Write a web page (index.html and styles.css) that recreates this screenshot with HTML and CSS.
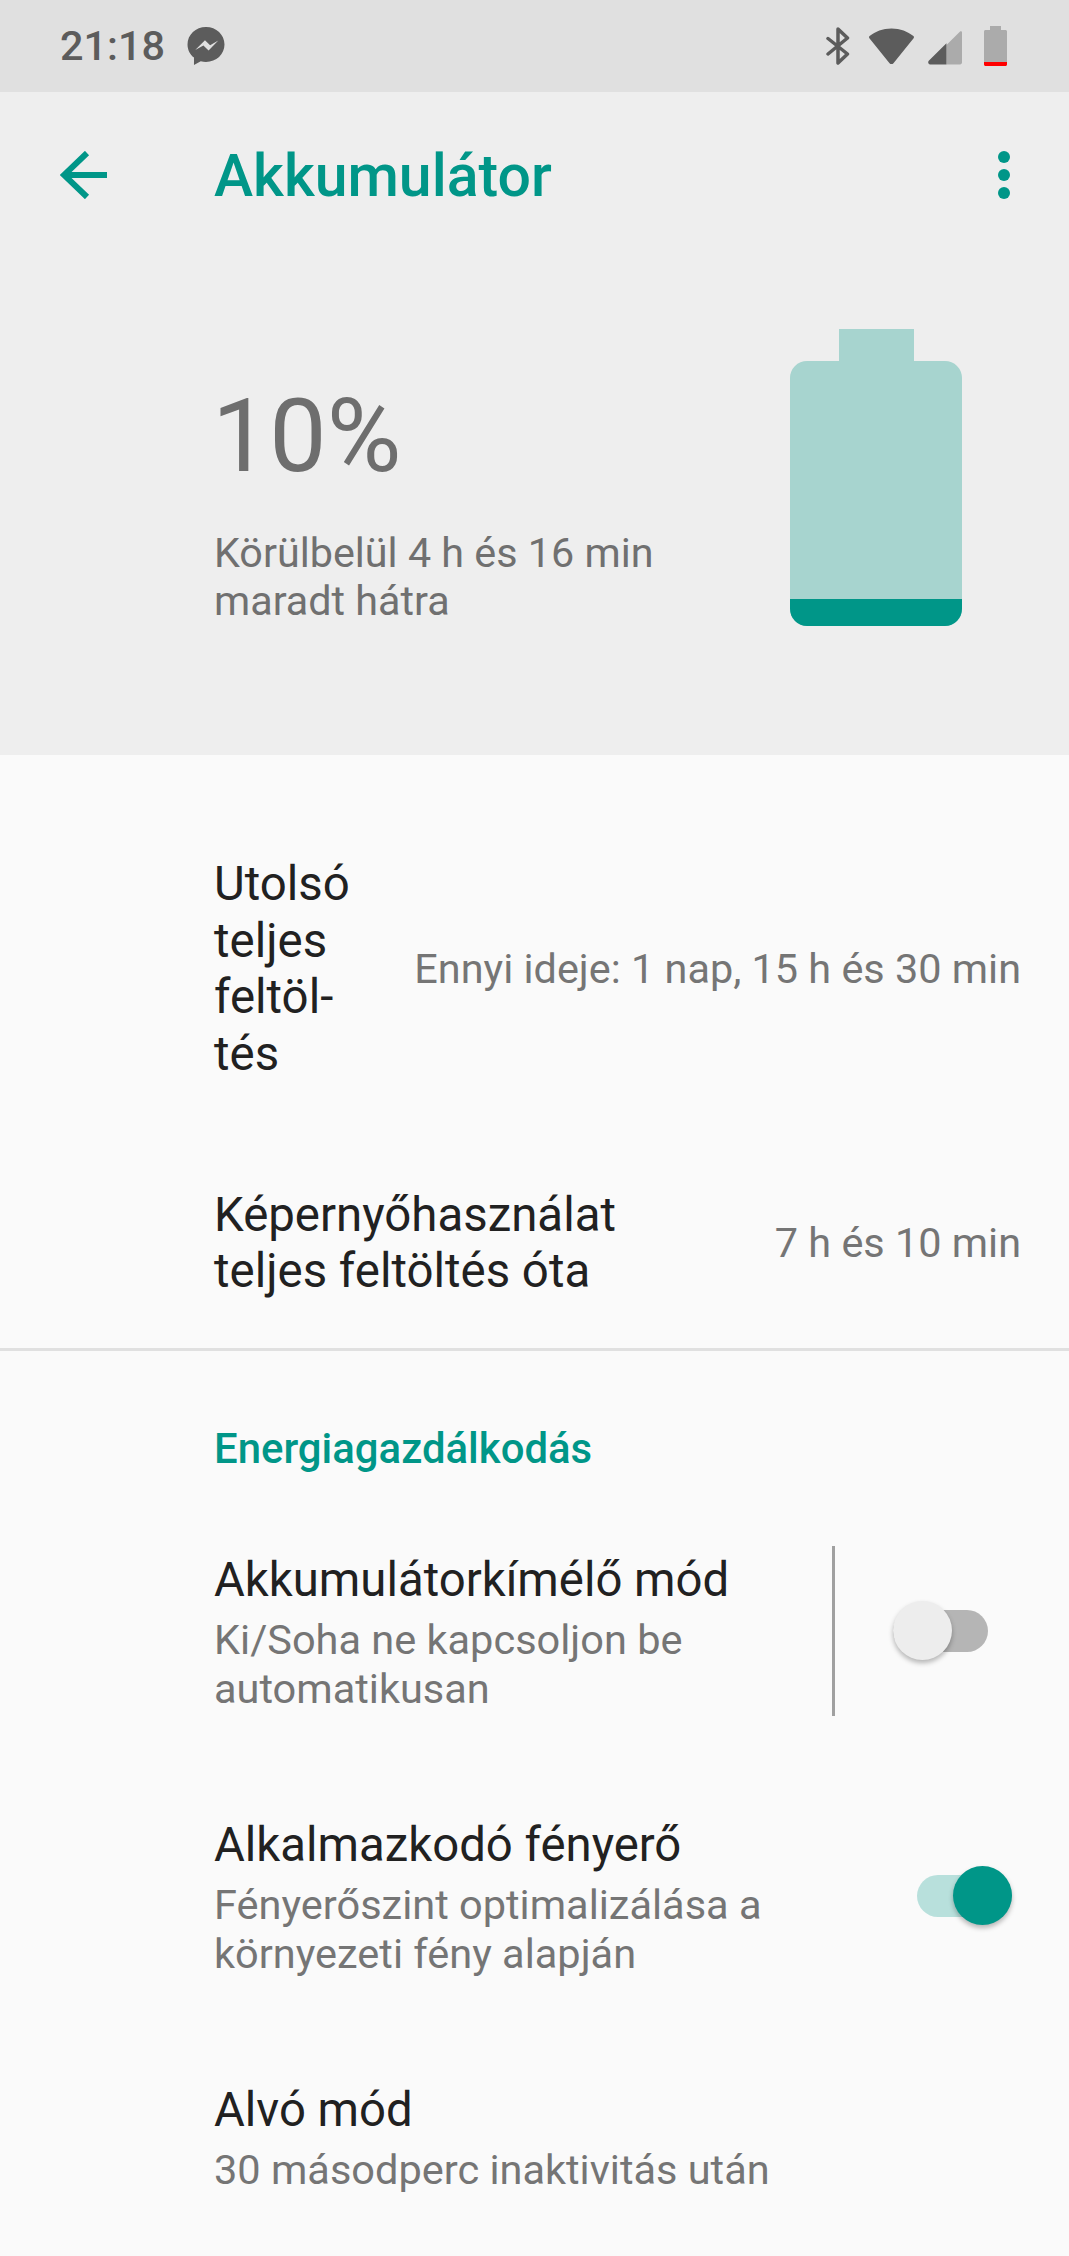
FILE: index.html
```html
<!DOCTYPE html>
<html lang="hu">
<head>
<meta charset="utf-8">
<title>Akkumulátor</title>
<link rel="stylesheet" href="styles.css">
</head>
<body>
<div class="status">
  <div class="status-left">
    <span class="clock">21:18</span>
    <svg class="ic-msg" viewBox="0 0 36 37"><path fill="#5c5c5c" d="M18 0C8 0 0 7.500 0 17c0 5.200 2.400 9.700 6.300 12.800V37l6.600-3.700c1.600.5 3.300.7 5.100.7 10 0 18-7.500 18-17S28 0 18 0z"/><path fill="#e0e0e0" d="M7.500 22.500 17 13l5 4.800L30 13.200 20.500 23l-5-4.900z"/></svg>
  </div>
  <div class="status-right">
    <svg class="ic-bt" viewBox="0 0 24 38"><path fill="none" stroke="#5c5c5c" stroke-width="3.500" stroke-linecap="round" stroke-linejoin="round" d="M2 11.500 21.500 27 12 36V2l9.500 9L2 27"/></svg>
    <svg class="ic-wifi" viewBox="0 0 46 37"><path fill="#5c5c5c" d="M23 0C14 0 6.500 3 .6 7.800c-.7.600-.7 1.500-.2 2.200L21 35.500c1 1.300 3 1.300 4 0L45.600 10c.5-.7.500-1.600-.2-2.200C39.500 3 32 0 23 0z"/></svg>
    <svg class="ic-sig" viewBox="0 0 35 35"><path fill="#ababab" d="M33 .6 19 14.500V34.500h14c1.100 0 2-.9 2-2V1.400c0-1-1.200-1.600-2-.8z"/><path fill="#5c5c5c" d="M19 12.500.8 30.700c-1.300 1.300-.4 3.800 1.400 3.800H19z"/></svg>
    <svg class="ic-batt" viewBox="0 0 23 40"><path fill="#ababab" d="M6 0h11v4h4.500c.8 0 1.500.7 1.500 1.500V36H0V5.500C0 4.700.7 4 1.500 4H6z"/><path fill="#f00" d="M0 36h23v2.500c0 .8-.7 1.500-1.500 1.500h-20C.7 40 0 39.300 0 38.500z"/></svg>
  </div>
</div>
<header class="hero">
  <div class="toolbar">
    <svg class="ic-back" viewBox="0 0 48 48"><path fill="none" stroke="#009688" stroke-width="6" d="M47 24H3M27 2 4 24l23 22"/></svg>
    <h1 class="title">Akkumulátor</h1>
    <div class="more"><i></i><i></i><i></i></div>
  </div>
  <div class="summary">
    <div class="level">
      <div class="percent">10%</div>
      <div class="remain">Körülbelül 4 h és 16 min<br>maradt hátra</div>
    </div>
    <div class="meter">
      <div class="meter-cap"></div>
      <div class="meter-body"><div class="meter-fill"></div></div>
    </div>
  </div>
</header>
<main class="list">
  <section class="usage">
    <div class="usage-row first">
      <div class="usage-title narrow">Utolsó teljes feltöl-<br>tés</div>
      <div class="usage-value">Ennyi ideje: 1 nap, 15 h és 30 min</div>
    </div>
    <div class="usage-row second">
      <div class="usage-title">Képernyőhasználat<br>teljes feltöltés óta</div>
      <div class="usage-value">7 h és 10 min</div>
    </div>
  </section>
  <section class="power">
    <h2 class="cat">Energiagazdálkodás</h2>
    <div class="pref saver">
      <div class="pref-text">
        <div class="pref-title">Akkumulátorkímélő mód</div>
        <div class="pref-sub">Ki/Soha ne kapcsoljon be<br>automatikusan</div>
      </div>
      <div class="vline"></div>
      <div class="switch off"><div class="track"></div><div class="thumb"></div></div>
    </div>
    <div class="pref bright">
      <div class="pref-text">
        <div class="pref-title">Alkalmazkodó fényerő</div>
        <div class="pref-sub">Fényerőszint optimalizálása a<br>környezeti fény alapján</div>
      </div>
      <div class="switch on"><div class="track"></div><div class="thumb"></div></div>
    </div>
    <div class="pref sleep">
      <div class="pref-text">
        <div class="pref-title">Alvó mód</div>
        <div class="pref-sub">30 másodperc inaktivitás után</div>
      </div>
    </div>
  </section>
</main>
</body>
</html>
```
FILE: styles.css
```css
* { box-sizing: border-box; }
html, body { margin: 0; padding: 0; }
body {
  width: 1069px;
  height: 2256px;
  overflow: hidden;
  background: #fafafa;
  font-family: Roboto, "Noto Sans", sans-serif;
}
.status {
  height: 92px;
  background: #e0e0e0;
  display: flex;
  justify-content: space-between;
  align-items: center;
  padding: 0 62px 0 60px;
}
.status-left, .status-right { display: flex; align-items: center; }
.clock { font-size: 41.400px; font-weight: 500; color: #5c5c5c; line-height: 46px; }
.ic-msg { width: 38px; height: 38px; margin-left: 22px; }
.ic-bt { width: 24px; height: 38px; }
.ic-wifi { width: 45px; height: 37px; margin-left: 19px; }
.ic-sig { width: 34px; height: 34px; margin-left: 14px; margin-top: 4px; }
.ic-batt { width: 23px; height: 40px; margin-left: 22px; }
.hero { height: 663px; background: #eeeeee; }
.toolbar { height: 166px; display: flex; align-items: center; padding: 0 59px 0 60px; }
.ic-back { width: 48px; height: 48px; flex: none; }
.title { margin: 0 0 0 106px; flex: 1; font-size: 59px; font-weight: 500; color: #009688; line-height: 70px; padding-top: 2px; }
.more { display: flex; flex-direction: column; gap: 6px; }
.more i { display: block; width: 12px; height: 12px; border-radius: 50%; background: #009688; }
.summary { display: flex; justify-content: space-between; padding: 71px 107px 0 214px; }
.percent { font-size: 102px; line-height: 118px; color: #6e6e6e; margin: 48px 0 0 -2px; }
.remain { font-size: 41.300px; line-height: 48px; color: #707070; margin-top: 34px; }
.meter { width: 172px; display: flex; flex-direction: column; align-items: center; }
.meter-cap { width: 75px; height: 32px; background: #a7d4cf; }
.meter-body { width: 172px; height: 265px; background: #a7d4cf; border-radius: 17px; overflow: hidden; display: flex; flex-direction: column; justify-content: flex-end; }
.meter-fill { height: 27px; background: #009688; }
.usage { height: 596px; border-bottom: 3px solid #e0e0e0; }
.usage-row { display: flex; align-items: center; justify-content: space-between; padding: 0 48px 0 214px; }
.usage-row.first { height: 428px; }
.usage-row.second { height: 120px; }
.usage-title { font-size: 47.400px; line-height: 56.500px; color: #212121; }
.usage-title.narrow { width: 170px; }
.usage-value { font-size: 41.400px; line-height: 48px; color: #757575; }
.cat { margin: 0; padding: 74px 0 0 214px; font-size: 41.900px; line-height: 48px; font-weight: 500; color: #009688; }
.pref { display: flex; align-items: center; padding-left: 214px; }
.pref-text { flex: 1; padding-top: 3px; }
.pref-title { font-size: 47.300px; line-height: 56px; color: #212121; margin-bottom: 8px; }
.pref-sub { font-size: 41.500px; line-height: 48.500px; color: #757575; }
.saver { height: 170px; margin-top: 73px; }
.bright { height: 164px; margin-top: 98px; }
.sleep { height: 115px; margin-top: 101px; }
.vline { width: 3px; height: 170px; background: #a0a0a0; }
.switch { position: relative; width: 95px; height: 60px; flex: none; }
.saver .switch { margin: 0 81px 0 58px; }
.bright .switch { margin-right: 57px; }
.track { position: absolute; left: 0; right: 0; top: 9px; height: 42px; border-radius: 21px; }
.thumb { position: absolute; top: 0; width: 59px; height: 59px; border-radius: 50%; box-shadow: 0 3px 5px rgba(0,0,0,.28); }
.off .track { background: #b5b5b5; }
.off .thumb { left: 0; background: #ededed; }
.on .track { background: #b8e0dc; }
.on .thumb { right: 0; background: #009688; }
```
